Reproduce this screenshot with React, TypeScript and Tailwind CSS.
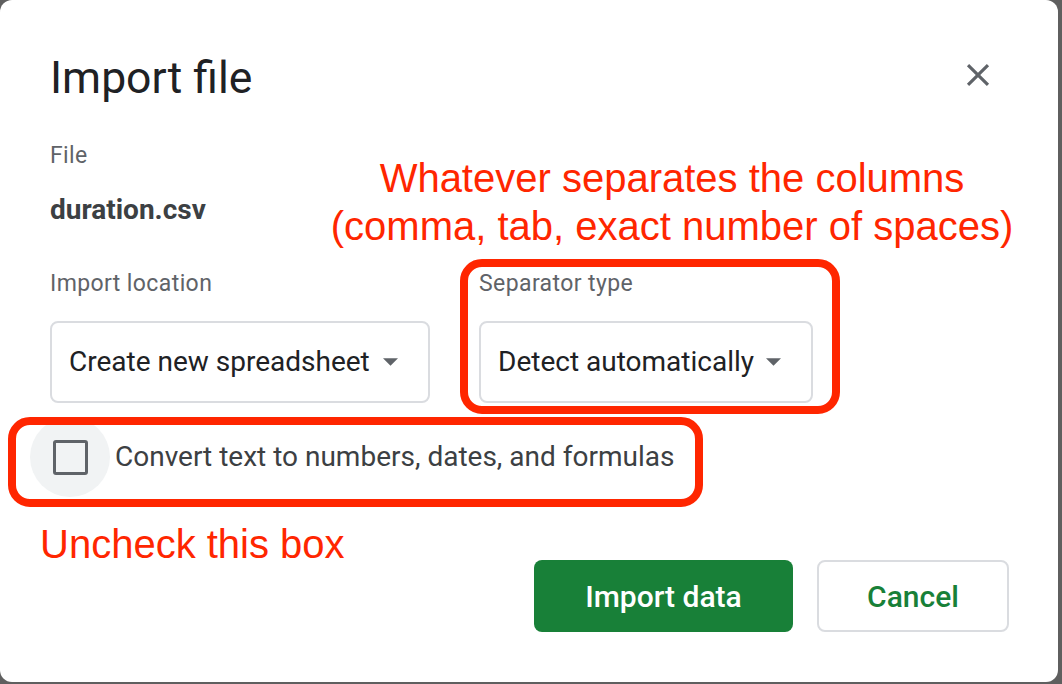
import React from "react";

const sans = "font-['Roboto','Liberation_Sans',sans-serif]";

function Caret() {
  return (
    <svg width="15" height="8" viewBox="0 0 10 5" aria-hidden="true" className="shrink-0">
      <path d="M0 0l5 5 5-5z" fill="#5f6368" />
    </svg>
  );
}

function Select({ label, value, width }: { label: string; value: string; width: string }) {
  return (
    <div className="flex flex-col">
      <span className="text-[23px] leading-[28px] tracking-[0.4px] text-[#5f6368]">{label}</span>
      <div
        className={`${width} mt-[23px] h-[82px] flex items-center justify-between rounded-[8px] border-2 border-[#dadce0] pl-[17px] pr-[30px]`}
      >
        <span className="text-[28px] leading-[36px] text-[#202124] whitespace-nowrap">{value}</span>
        <Caret />
      </div>
    </div>
  );
}

export default function App() {
  return (
    <div className={`relative w-[1062px] h-[684px] overflow-hidden bg-[#5f5f5f] ${sans}`}>
      {/* Dialog */}
      <div className="w-[1058px] h-[682px] rounded-[12px] bg-white pl-[50px] pr-[49px] pt-[52px] flex flex-col">
        <div className="flex items-start justify-between">
          <h1 className="text-[44.5px] leading-[52px] font-normal text-[#202124]">Import file</h1>
          <svg width="38" height="38" viewBox="0 0 24 24" className="mt-[4px] mr-[12px]" aria-hidden="true">
            <path
              fill="#5f6368"
              d="M19 6.41 17.59 5 12 10.59 6.41 5 5 6.41 10.59 12 5 17.59 6.41 19 12 13.41 17.59 19 19 17.59 13.41 12z"
            />
          </svg>
        </div>

        <span className="mt-[38px] text-[23px] leading-[28px] tracking-[0.4px] text-[#5f6368]">File</span>
        <span className="mt-[24px] text-[28px] leading-[32px] font-bold text-[#3c4043]">duration.csv</span>

        <div className="mt-[44px] flex gap-[49px]">
          <Select label="Import location" value="Create new spreadsheet" width="w-[380px]" />
          <Select label="Separator type" value="Detect automatically" width="w-[334px]" />
        </div>

        {/* Checkbox row */}
        <div className="mt-[14px] -ml-[20px] flex items-center gap-[5px] h-[80px]">
          <div className="w-[80px] h-[80px] rounded-full bg-[#f1f3f4] flex items-center justify-center">
            <div className="w-[35px] h-[35px] rounded-[3px] border-[3px] border-[#5f6368]" />
          </div>
          <span className="text-[28px] leading-[36px] text-[#3c4043] whitespace-nowrap">
            Convert text to numbers, dates, and formulas
          </span>
        </div>

        {/* Actions */}
        <div className="mt-[63px] flex justify-end gap-[24px]">
          <button className="w-[259px] h-[72px] rounded-[8px] bg-[#188038] text-white text-[30px] font-medium">
            Import data
          </button>
          <button className="w-[192px] h-[72px] rounded-[8px] border-2 border-[#dadce0] bg-white text-[#188038] text-[30px] font-medium">
            Cancel
          </button>
        </div>
      </div>

      {/* Annotations */}
      <div className="absolute left-[460px] top-[259px] w-[380px] h-[155px] rounded-[22px] border-[8px] border-[#ff2600]" />
      <div className="absolute left-[8px] top-[417px] w-[695px] h-[90px] rounded-[22px] border-[8px] border-[#ff2600]" />
      <div className="absolute left-[272px] top-[154px] w-[800px] text-center font-['Liberation_Sans',Arial,sans-serif] text-[40px] leading-[48px] text-[#ff2600]">
        <div>Whatever separates the columns</div>
        <div>(comma, tab, exact number of spaces)</div>
      </div>
      <div className="absolute left-[40px] top-[522px] font-['Liberation_Sans',Arial,sans-serif] text-[40px] leading-[44px] text-[#ff2600]">
        Uncheck this box
      </div>
    </div>
  );
}
